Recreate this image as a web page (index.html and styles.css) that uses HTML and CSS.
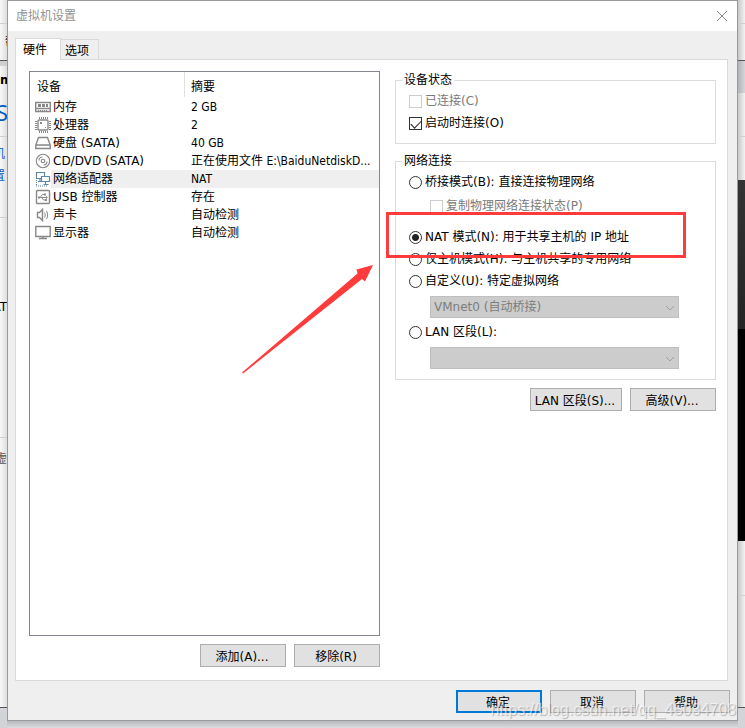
FILE: index.html
```html
<!DOCTYPE html>
<html lang="zh-CN">
<head>
<meta charset="utf-8">
<title>虚拟机设置</title>
<link rel="stylesheet" href="styles.css">
</head>
<body>
<div class="desktop">
  <div class="strip strip-left">
    <div class="seg seg-menu"></div>
    <div class="seg seg-bar"><span>帮</span></div>
    <div class="seg seg-tabs"></div>
    <div class="seg seg-title"><b>m</b><span class="strip-heading">S</span></div>
    <div class="seg seg-links"><span>机</span><span>置</span></div>
    <div class="seg seg-devices"><span>AT</span></div>
    <div class="seg seg-info"><span>虚</span></div>
    <div class="seg seg-foot"></div>
  </div>

  <main class="dialog">
    <header class="titlebar">
      <h1>虚拟机设置</h1>
      <button class="close" type="button" aria-label="关闭">
        <svg width="12" height="12" viewBox="0 0 12 12"><path d="M1 1l10 10M11 1L1 11"/></svg>
      </button>
    </header>

    <div class="content">
      <div class="tabs" role="tablist">
        <button class="tab tab-active" type="button" role="tab" aria-selected="true">硬件</button>
        <button class="tab" type="button" role="tab" aria-selected="false">选项</button>
      </div>

      <section class="panel">
        <div class="devices">
          <div class="list">
            <table>
              <colgroup><col class="col-icon"><col class="col-name"><col></colgroup>
              <thead>
                <tr><th colspan="2">设备</th><th class="summary-head">摘要</th></tr>
              </thead>
              <tbody>
                <tr>
                  <td><svg class="icon" viewBox="0 0 16 16"><path d="M.7 3.500h14.600v9H.7zM1 9.500h14"/><path class="fill" d="M3 5h3v3H3zM7 5h3v3H7zM11 5h2v3h-2zM3 11h1v1H3zM5 11h1v1H5zM7 11h1v1H7zM9 11h1v1H9zM11 11h1v1h-1z"/></svg></td>
                  <td>内存</td><td>2 GB</td>
                </tr>
                <tr>
                  <td><svg class="icon" viewBox="0 0 16 16"><rect x="3" y="3" width="10" height="10" rx="1"/><path class="pins" d="M4.500 0v2M6.500 0v2M8.500 0v2M10.500 0v2M12.500 0v2M4.500 14v2M6.500 14v2M8.500 14v2M10.500 14v2M12.500 14v2M0 4.500h2M0 6.500h2M0 8.500h2M0 10.500h2M0 12.500h2M14 4.500h2M14 6.500h2M14 8.500h2M14 10.500h2M14 12.500h2"/><path class="fill" d="M5 5h2v2H5zM10 10h1v1h-1z"/></svg></td>
                  <td>处理器</td><td>2</td>
                </tr>
                <tr>
                  <td><svg class="icon" viewBox="0 0 16 16"><path d="M3.500 2.500h9l2.700 7.500v3.500H.8V10zM.8 10h14.400"/></svg></td>
                  <td>硬盘 (SATA)</td><td>40 GB</td>
                </tr>
                <tr>
                  <td><svg class="icon icon-disc" viewBox="0 0 16 16"><circle cx="8" cy="8" r="6.700"/><circle cx="8" cy="8" r="1.800"/><path d="M4 7.500c0-2 1.500-3.500 3.500-3.500M12 8.500c0 2-1.500 3.500-3.500 3.500"/></svg></td>
                  <td>CD/DVD (SATA)</td><td>正在使用文件 E:\BaiduNetdiskD...</td>
                </tr>
                <tr class="selected">
                  <td><svg class="icon icon-net" viewBox="0 0 16 16"><path d="M1.500 1.500h8v6h-8zM5 8v2M3 10.500h4"/><path class="screen" d="M6.500 5.500h8v5h-8z"/><path d="M10.500 11v2M8.500 13.500h5"/><path class="dots" d="M1.500 9v6M1 15h12"/></svg></td>
                  <td>网络适配器</td><td>NAT</td>
                </tr>
                <tr>
                  <td><svg class="icon" viewBox="0 0 16 16"><rect x="1.500" y="1.500" width="13" height="13" rx="1"/><path class="pins" d="M4 8.500h8M5.500 8l2-2.500h2M7 9l1.500 2h2"/><path class="fill" d="M3 7.500h2v2H3zM9 4.500h2v2H9zM10 10h2v2h-2zM11 7l2 1.500-2 1.500z"/></svg></td>
                  <td>USB 控制器</td><td>存在</td>
                </tr>
                <tr>
                  <td><svg class="icon" viewBox="0 0 16 16"><path d="M2.500 5.500h2l3-3v11l-3-3h-2z"/><path class="pins" d="M9.500 5.500c1 1.500 1 3.500 0 5M11.500 4c1.500 2.500 1.500 5.500 0 8"/></svg></td>
                  <td>声卡</td><td>自动检测</td>
                </tr>
                <tr>
                  <td><svg class="icon" viewBox="0 0 16 16"><path d="M.8 1.500h14.400v10H.8zM8 12v1M4 13.500h8"/></svg></td>
                  <td>显示器</td><td>自动检测</td>
                </tr>
              </tbody>
            </table>
          </div>
          <div class="actions">
            <button class="btn" type="button">添加(A)...</button>
            <button class="btn" type="button">移除(R)</button>
          </div>
        </div>

        <form class="settings">
          <fieldset class="group">
            <legend>设备状态</legend>
            <label class="row row-off"><input type="checkbox" disabled>已连接(C)</label>
            <label class="row"><input type="checkbox" checked>启动时连接(O)</label>
          </fieldset>

          <fieldset class="group group-network">
            <legend>网络连接</legend>
            <label class="row"><input type="radio" name="net">桥接模式(B): 直接连接物理网络</label>
            <label class="row row-off row-nested"><input type="checkbox" disabled>复制物理网络连接状态(P)</label>
            <label class="row"><input type="radio" name="net" checked>NAT 模式(N): 用于共享主机的 IP 地址</label>
            <label class="row"><input type="radio" name="net">仅主机模式(H): 与主机共享的专用网络</label>
            <label class="row"><input type="radio" name="net">自定义(U): 特定虚拟网络</label>
            <div class="pick">
              <select disabled aria-label="虚拟网络"><option>VMnet0 (自动桥接)</option></select>
              <svg width="10" height="6" viewBox="0 0 10 6"><path d="M1 1l4 4 4-4"/></svg>
            </div>
            <label class="row"><input type="radio" name="net">LAN 区段(L):</label>
            <div class="pick">
              <select disabled aria-label="LAN 区段"><option></option></select>
              <svg width="10" height="6" viewBox="0 0 10 6"><path d="M1 1l4 4 4-4"/></svg>
            </div>
          </fieldset>

          <div class="actions">
            <button class="btn btn-wide" type="button">LAN 区段(S)...</button>
            <button class="btn" type="button">高级(V)...</button>
          </div>
        </form>
      </section>

      <footer class="actions footer">
        <button class="btn btn-default" type="button">确定</button>
        <button class="btn" type="button">取消</button>
        <button class="btn" type="button">帮助</button>
      </footer>
    </div>
  </main>

  <div class="strip strip-right">
    <div class="seg seg-menu"></div>
    <div class="seg seg-bar"></div>
    <div class="seg seg-tabrow"></div>
    <div class="seg seg-head"></div>
    <div class="seg seg-gap"></div>
    <div class="seg seg-dark"></div>
    <div class="seg seg-black"></div>
    <div class="seg seg-mid"></div>
    <div class="seg seg-info"></div>
    <div class="seg seg-foot"></div>
  </div>

  <div class="mark-box"></div>
  <svg class="mark-arrow" width="132" height="110" viewBox="0 0 132 110"><path d="M0 107.500L115.500 8.500l-1-4L131 0l-8 16.500-3-2.500L1 108.500z"/></svg>
  <div class="watermark">https://blog.csdn.net/qq_45034708</div>
</div>
</body>
</html>
```
FILE: styles.css
```css
* {
  box-sizing: border-box;
}

body {
  margin: 0;
  font: 12px/18px "DejaVu Sans", "Noto Sans CJK SC", sans-serif;
  color: #000;
}

button,
select {
  font: inherit;
  color: inherit;
}

.desktop {
  position: relative;
  display: grid;
  grid-template-columns: 7px minmax(0, 1fr) 7px;
  min-height: 100vh;
  overflow: hidden;
  background: linear-gradient(to top, #dadbde 0, #b4b5b8 8px, #f0f0f0 8px);
}

/* Window behind the dialog */
.strip {
  display: flex;
  flex-direction: column;
  overflow: hidden;
  background: #f3f3f3;
}

.strip-left {
  background: linear-gradient(to right, #f8f8f8, #dedede);
}

.strip-right {
  background: linear-gradient(to right, #c8c8c8, #f3f3f3);
}

.seg {
  flex: none;
  overflow: hidden;
  border-bottom: 1px solid #d0d0d0;
  white-space: nowrap;
}

.seg span,
.seg b {
  display: block;
}

.seg-menu {
  height: 24px;
}

.seg-bar {
  display: flex;
  align-items: center;
  height: 37px;
  padding-left: 5px;
  border-color: #555;
}

.seg-tabs {
  height: 5px;
  background: #cfd0d3;
}

.seg-title {
  height: 71px;
  padding-top: 5px;
}

.strip-heading {
  margin-left: -4px;
  padding-top: 11px;
  font: 22px/24px "Noto Sans", sans-serif;
  color: #0a5ac0;
}

.seg-links {
  display: flex;
  flex-direction: column;
  align-items: flex-end;
  height: 81px;
  padding: 6px 2px 0 0;
  line-height: 22px;
  color: #0a5ac0;
}

.seg-devices {
  display: flex;
  justify-content: flex-end;
  height: 220px;
  padding-top: 80px;
}

.seg-info {
  display: flex;
  flex: 1;
  justify-content: flex-end;
  padding-top: 12px;
  border-color: #555;
  color: #555;
}

.seg-foot {
  height: 20px;
  border: 0;
  background: #d3d4d7;
}

.seg-tabrow {
  height: 32px;
  border: 0;
  background: linear-gradient(to right, #b2b3b6, #d6d7da);
}

.seg-head {
  height: 44px;
}

.seg-gap {
  height: 43px;
  border: 0;
}

.seg-dark {
  height: 149px;
  border: 0;
  background: linear-gradient(#343434, #242424);
}

.seg-black {
  height: 212px;
  border: 0;
  background: #000;
}

.seg-mid {
  height: 55px;
}

/* Dialog */
.dialog {
  display: flex;
  flex-direction: column;
  margin-bottom: 7px;
  border: 1px solid #9a9a9a;
  background: #efefef;
}

.titlebar {
  display: flex;
  align-items: center;
  justify-content: space-between;
  height: 30px;
  padding: 0 9px 0 8px;
  background: #fff;
}

.titlebar h1 {
  margin: 0;
  font-size: 12px;
  font-weight: 400;
  color: #929292;
}

.close {
  display: flex;
  padding: 0;
  border: 0;
  background: none;
}

.close svg {
  fill: none;
  stroke: #8a8a8a;
}

.content {
  display: flex;
  flex: 1;
  flex-direction: column;
  padding: 7px 9px 7px 7px;
}

.tabs {
  display: flex;
  align-items: flex-end;
}

.tab {
  height: 20px;
  padding: 2px 9px 0 4px;
  border: 1px solid #d9d9d9;
  border-width: 1px 1px 0 0;
  background: #efefef;
}

.tab-active {
  position: relative;
  height: 22px;
  margin-bottom: -1px;
  padding: 0 13px 0 7px;
  border-left-width: 1px;
  background: #fff;
}

.panel {
  display: flex;
  flex: 1;
  gap: 15px;
  padding: 11px 11px 13px 13px;
  border: 1px solid #d9d9d9;
  background: #fff;
}

.devices {
  display: flex;
  flex: 351;
  flex-direction: column;
  gap: 8px;
  min-width: 0;
}

.list {
  flex: 1;
  border: 1px solid #828790;
}

.list table {
  width: 100%;
  table-layout: fixed;
  border-collapse: collapse;
}

.col-icon {
  width: 21px;
}

.col-name {
  width: 133px;
}

.list th {
  height: 26px;
  padding: 3px 0 0 7px;
  font-weight: 400;
  text-align: left;
}

.list .summary-head {
  background: linear-gradient(#e0e0e0, #e0e0e0) left top / 1px 25px no-repeat;
}

.list td {
  height: 18px;
  padding: 0;
  white-space: nowrap;
}

.list td:nth-child(1) {
  padding-left: 5px;
}

.list td:nth-child(2) {
  padding-left: 2px;
}

.list td:nth-child(3) {
  padding-left: 7px;
  font-family: "DejaVu Sans Condensed", "DejaVu Sans", "Noto Sans CJK SC", sans-serif;
}

.selected td:not(:first-child) {
  background: #efefef;
}

.icon {
  display: block;
  width: 16px;
  height: 16px;
  fill: none;
  stroke: #888;
  stroke-width: 1.4;
}

.icon .fill {
  fill: #888;
  stroke: none;
}

.icon .pins {
  stroke-width: 1;
}

.icon-disc {
  stroke-width: 1.1;
}

.icon-net {
  stroke: #5f86a3;
  stroke-width: 1.2;
}

.icon-net .screen {
  fill: #fff;
}

.icon-net .dots {
  stroke-dasharray: 1 1;
}

.actions {
  display: flex;
  justify-content: flex-end;
  gap: 8px;
}

.btn {
  width: 86px;
  height: 23px;
  padding: 2px 2px 0 0;
  border: 1px solid #adadad;
  background: #e1e1e1;
  white-space: nowrap;
}

.btn-wide {
  width: 92px;
}

.btn-default {
  border: 2px solid #0078d7;
}

.settings {
  flex: 321;
  min-width: 0;
}

.group {
  min-width: 0;
  margin: 0 0 8px;
  padding: 1px 13px 9px;
  border: 1px solid #dcdcdc;
}

.group legend {
  height: 18px;
  margin-left: -7px;
  padding: 0 2px;
}

.group-network {
  padding-bottom: 7px;
}

.row {
  display: flex;
  align-items: center;
  gap: 3px;
  height: 22px;
  white-space: nowrap;
}

.row-off {
  color: #7a7a7a;
}

.row-nested {
  margin: 2px 0 9px 21px;
}

.row input {
  flex: none;
  width: 13px;
  height: 13px;
  margin: 0;
  border: 1px solid #333;
  background: #fff;
  appearance: none;
}

.row input:disabled {
  border-color: #ccc;
}

.row input[type="radio"] {
  border-radius: 50%;
}

.row input[type="radio"]:checked {
  background: radial-gradient(circle, #222 3px, #fff 4px);
}

.row input[type="checkbox"]:checked::before {
  content: "";
  display: block;
  width: 9px;
  height: 5px;
  margin: 2px 1px;
  border: solid #222;
  border-width: 0 0 1px 1px;
  transform: rotate(-45deg);
}

.pick {
  position: relative;
  margin: 4px 23px 3px 21px;
}

.pick select {
  display: block;
  width: 100%;
  height: 22px;
  padding: 0 3px;
  border: 1px solid #bfbfbf;
  border-radius: 0;
  background: #ccc;
  color: #7d7d7d;
  opacity: 1;
  appearance: none;
}

.pick svg {
  position: absolute;
  top: 9px;
  right: 4px;
  fill: none;
  stroke: #a0a0a0;
}

.footer {
  margin-right: -2px;
  padding-top: 9px;
}

/* Annotations over the dialog */
.mark-box {
  position: absolute;
  top: 212px;
  left: 386px;
  width: 300px;
  height: 46px;
  border: 3px solid #ff3b3b;
}

.mark-arrow {
  position: absolute;
  top: 265px;
  left: 242px;
  fill: #ff3b3b;
}

.watermark {
  position: absolute;
  right: 9px;
  bottom: 8px;
  font: 16px/20px "Liberation Sans", sans-serif;
  color: rgba(255, 255, 255, 0.6);
  text-shadow: 1px 1px 1px rgba(0, 0, 0, 0.25);
}
```
